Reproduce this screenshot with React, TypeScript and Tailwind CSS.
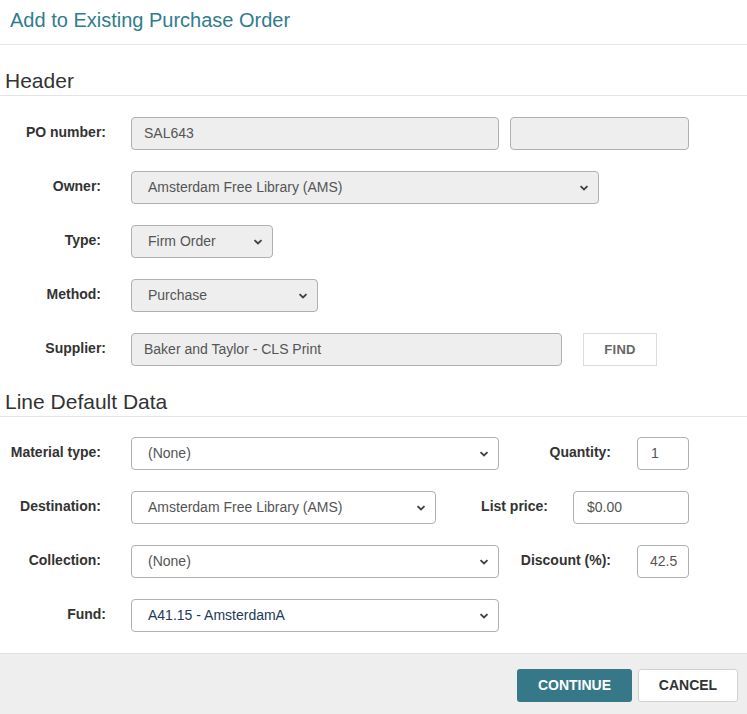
import React from "react";

const Chevron = () => (
  <svg width="10" height="7" viewBox="0 0 10 7" className="pointer-events-none absolute right-[9px] top-1/2 -translate-y-1/2">
    <path d="M1.5 1.6 L5 5 L8.5 1.6" fill="none" stroke="#444" strokeWidth="1.9" />
  </svg>
);

const Select = ({
  value,
  w,
  disabled,
  textClass = "text-[#555]",
}: {
  value: string;
  w: string;
  disabled?: boolean;
  textClass?: string;
}) => (
  <div
    className={`relative ${w} h-[33px] rounded-[4px] border ${
      disabled ? "bg-[#eeeeee] border-[#b0b0b0]" : "bg-white border-[#b0b0b0]"
    } flex items-center pl-[16px] text-[14px] ${textClass}`}
  >
    <span>{value}</span>
    <Chevron />
  </div>
);

const Input = ({
  value,
  w,
  disabled,
  pl = "pl-[12px]",
}: {
  value: string;
  w: string;
  disabled?: boolean;
  pl?: string;
}) => (
  <div
    className={`${w} h-[33px] rounded-[4px] border ${
      disabled ? "bg-[#eeeeee] border-[#b0b0b0]" : "bg-white border-[#b0b0b0]"
    } flex items-center ${pl} text-[14px] text-[#555]`}
  >
    {value}
  </div>
);

const Label = ({ text, pr = "pr-[30px]" }: { text: string; pr?: string }) => (
  <div className={`w-[131px] shrink-0 text-right ${pr} text-[14px] font-bold text-[#333] -mt-[3px]`}>{text}</div>
);

const RLabel = ({ text, w = "w-[112px]" }: { text: string; w?: string }) => (
  <div className={`${w} shrink-0 text-right text-[14px] font-bold text-[#333] -mt-[3px]`}>{text}</div>
);

export default function App() {
  return (
    <div className="w-[747px] h-[714px] bg-white font-['Liberation_Sans'] flex flex-col overflow-hidden">
      <div className="h-[45px] shrink-0 border-b border-[#e6e6e6] flex items-center pl-[10px] pb-[4px]">
        <h1 className="text-[20px] text-[#2f7d8c] leading-none">Add to Existing Purchase Order</h1>
      </div>

      <div className="mt-[24px] border-b border-[#e3e3e3] pl-[5px] pb-[3px]">
        <h2 className="text-[21px] leading-[23px] text-[#333]">Header</h2>
      </div>

      <div className="flex flex-col gap-[21px] pt-[21px]">
        <div className="flex items-center">
          <Label text="PO number:" pr="pr-[25px]" />
          <Input value="SAL643" w="w-[368px]" disabled />
          <div className="ml-[11px]">
            <Input value="" w="w-[179px]" disabled />
          </div>
        </div>
        <div className="flex items-center">
          <Label text="Owner:" />
          <Select value="Amsterdam Free Library (AMS)" w="w-[468px]" disabled />
        </div>
        <div className="flex items-center">
          <Label text="Type:" />
          <Select value="Firm Order" w="w-[142px]" disabled />
        </div>
        <div className="flex items-center">
          <Label text="Method:" />
          <Select value="Purchase" w="w-[187px]" disabled />
        </div>
        <div className="flex items-center">
          <Label text="Supplier:" pr="pr-[25px]" />
          <Input value="Baker and Taylor - CLS Print" w="w-[431px]" disabled />
          <button className="ml-[21px] w-[74px] h-[33px] border border-[#dcdcdc] bg-white text-[13px] font-bold text-[#666] tracking-[0.3px]">
            FIND
          </button>
        </div>
      </div>

      <div className="mt-[24px] border-b border-[#e3e3e3] pl-[5px] pb-[3px]">
        <h2 className="text-[21px] leading-[23px] text-[#333]">Line Default Data</h2>
      </div>

      <div className="flex flex-col gap-[21px] pt-[20px]">
        <div className="flex items-center">
          <Label text="Material type:" />
          <Select value="(None)" w="w-[368px]" />
          <RLabel text="Quantity:" />
          <div className="ml-[26px]">
            <Input value="1" w="w-[52px]" pl="pl-[13px]" />
          </div>
        </div>
        <div className="flex items-center">
          <Label text="Destination:" />
          <Select value="Amsterdam Free Library (AMS)" w="w-[305px]" />
          <RLabel text="List price:" />
          <div className="ml-[25px]">
            <Input value="$0.00" w="w-[116px]" pl="pl-[13px]" />
          </div>
        </div>
        <div className="flex items-center">
          <Label text="Collection:" />
          <Select value="(None)" w="w-[368px]" />
          <RLabel text="Discount (%):" />
          <div className="ml-[26px]">
            <Input value="42.5" w="w-[52px]" pl="pl-[12px]" />
          </div>
        </div>
        <div className="flex items-center">
          <Label text="Fund:" pr="pr-[25px]" />
          <Select value="A41.15 - AmsterdamA" w="w-[368px]" textClass="text-[#22395a]" />
        </div>
      </div>

      <div className="mt-[21px] flex-1 bg-[#eeeeee] border-t border-[#e0e0e0] flex justify-end items-start pt-[15px] pr-[9px] gap-[6px]">
        <button className="w-[115px] h-[33px] rounded-[3px] bg-[#367887] text-white text-[14px] font-bold">
          CONTINUE
        </button>
        <button className="w-[100px] h-[33px] rounded-[3px] bg-white border border-[#d0d0d0] text-[#333] text-[14px] font-bold">
          CANCEL
        </button>
      </div>
    </div>
  );
}
